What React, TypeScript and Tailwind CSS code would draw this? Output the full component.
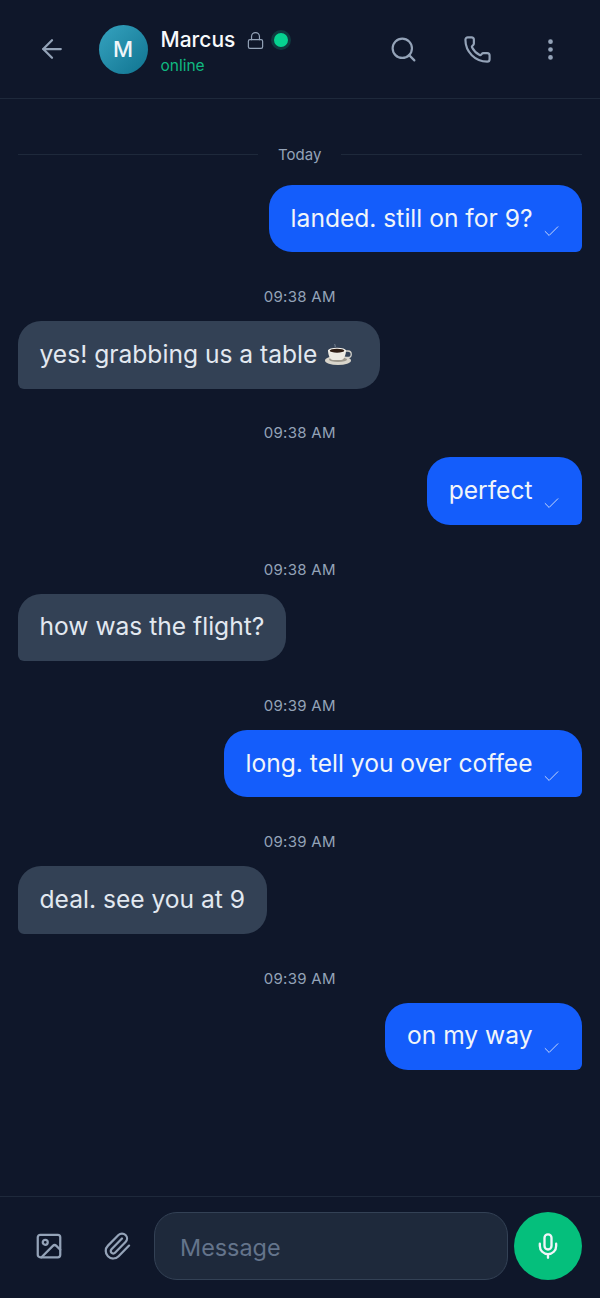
import React from 'react'
import { ArrowLeft, Check, EllipsisVertical, Image, Lock, Mic, Paperclip, Phone, Search } from 'lucide-react'

type Msg = { text: string; time?: string; mine: boolean; cup?: boolean }

const messages: Msg[] = [
  { text: 'landed. still on for 9?', mine: true },
  { text: 'yes! grabbing us a table', time: '09:38 AM', mine: false, cup: true },
  { text: 'perfect', time: '09:38 AM', mine: true },
  { text: 'how was the flight?', time: '09:38 AM', mine: false },
  { text: 'long. tell you over coffee', time: '09:39 AM', mine: true },
  { text: 'deal. see you at 9', time: '09:39 AM', mine: false },
  { text: 'on my way', time: '09:39 AM', mine: true },
]

const CoffeeCup = () => (
  <svg width="27" height="24" viewBox="0 0 27 24" className="ml-[8px] mr-[6px] shrink-0 -translate-y-[1px]">
    <path d="M10 2c-1 1 1 1.500 0 3" stroke="#8b95a3" strokeWidth="0.8" fill="none" />
    <ellipse cx="13" cy="18.500" rx="13" ry="4.500" fill="#d9d5cb" />
    <ellipse cx="13" cy="17.500" rx="9" ry="2.500" fill="#9c978c" />
    <path d="M20 9h3a3 3 0 0 1 0 6.500h-3" stroke="#d4d2cb" strokeWidth="1.300" fill="none" />
    <path d="M3 8h18c0 5-2 10-5 10h-8c-3 0-5-5-5-10z" fill="#ece9e1" />
    <ellipse cx="12" cy="8.500" rx="9" ry="2.800" fill="#f4f2ec" />
    <ellipse cx="12" cy="8.700" rx="7.300" ry="2" fill="#2e1c12" />
  </svg>
)

const Bubble = ({ msg }: { msg: Msg }) => {
  if (msg.mine) {
    return (
      <div className="flex justify-end">
        <div className="flex h-[67.500px] items-center rounded-t-[23px] rounded-bl-[23px] rounded-br-[6px] bg-[#145dfb] pl-[21.500px] pr-[21px]">
          <span className="text-[24.600px] leading-[32px] text-[#f1f5f9] -translate-y-[1px]">{msg.text}</span>
          <Check size={19} strokeWidth={1.200} className="ml-[9px] mt-[25px] text-[#cfdcfa]" />
        </div>
      </div>
    )
  }
  return (
    <div className="flex justify-start">
      <div className="flex h-[67.500px] items-center rounded-t-[23px] rounded-br-[23px] rounded-bl-[6px] bg-[#334155] pl-[21.500px] pr-[22px]">
        <span className="text-[24.600px] leading-[32px] text-[#e2e8f0] -translate-y-[1px]">{msg.text}</span>
        {msg.cup && <CoffeeCup />}
      </div>
    </div>
  )
}

export default function App() {
  return (
    <div className="flex h-[1298px] w-[600px] flex-col bg-[#0f172a]" style={{ fontFamily: 'Inter, sans-serif' }}>
      <header className="flex h-[99px] shrink-0 items-center border-b border-[#1e293b] pl-[37px] pr-[36px]">
        <ArrowLeft size={30} strokeWidth={1.800} className="text-[#94a3b8]" />
        <div className="ml-[31.500px] flex h-[49px] w-[49px] items-center justify-center rounded-full bg-gradient-to-br from-[#35a3c0] to-[#0e7490] text-[22px] font-medium text-[#f1f5f9]">
          M
        </div>
        <div className="ml-[13px] mt-[4px] flex flex-col">
          <div className="flex items-center">
            <span className="text-[21px] font-medium leading-[28px] text-[#f8fafc]">Marcus</span>
            <Lock size={19} strokeWidth={1.500} className="ml-[10.500px] text-[#94a3b8]" />
            <span className="ml-[6px] h-[20px] w-[20px] rounded-full border-[3px] border-[#0f3b3f] bg-[#06d290]" />
          </div>
          <span className="mt-[2px] text-[15.500px] leading-[20px] text-[#10b981]">online</span>
        </div>
        <div className="ml-auto flex items-center">
          <Search size={29} strokeWidth={1.800} className="text-[#94a3b8]" />
          <Phone size={29} strokeWidth={1.800} className="ml-[45px] text-[#94a3b8]" />
          <EllipsisVertical size={27} strokeWidth={2.200} className="ml-[45px] text-[#94a3b8]" />
        </div>
      </header>

      <main className="flex flex-1 flex-col pl-[18px] pr-[18.500px] pt-[45.500px]">
        <div className="flex items-center">
          <div className="h-px flex-1 bg-[#1e293b]" />
          <span className="mx-[20px] text-[15px] leading-[20px] text-[#94a3b8]">Today</span>
          <div className="h-px flex-1 bg-[#1e293b]" />
        </div>
        <div className="mt-[20.300px] flex flex-col">
          {messages.map((m, i) => (
            <div key={i}>
              {m.time && (
                <div className="mb-[14px] mt-[34.800px] text-center text-[15px] leading-[20px] tracking-[0.3px] text-[#94a3b8]">{m.time}</div>
              )}
              <Bubble msg={m} />
            </div>
          ))}
        </div>
      </main>

      <footer className="flex h-[102px] shrink-0 items-start border-t border-[#1e293b] pl-[34px] pr-[18.500px] pt-[15px]">
        <div className="flex h-[67.500px] items-center">
          <Image size={30} strokeWidth={1.800} className="text-[#94a3b8]" />
          <Paperclip size={30} strokeWidth={1.800} className="ml-[38px] text-[#94a3b8]" />
        </div>
        <div className="ml-[22px] flex h-[67.500px] w-[354px] items-center rounded-[23px] border border-[#334155] bg-[#1e293b] pl-[25px]">
          <span className="mt-[3px] text-[23.400px] text-[#64748b]">Message</span>
        </div>
        <div className="ml-[6.500px] flex h-[67.500px] w-[67.500px] items-center justify-center rounded-full bg-[#05bf7c]">
          <Mic size={28} strokeWidth={2} className="text-[#f1f5f9]" />
        </div>
      </footer>
    </div>
  )
}
